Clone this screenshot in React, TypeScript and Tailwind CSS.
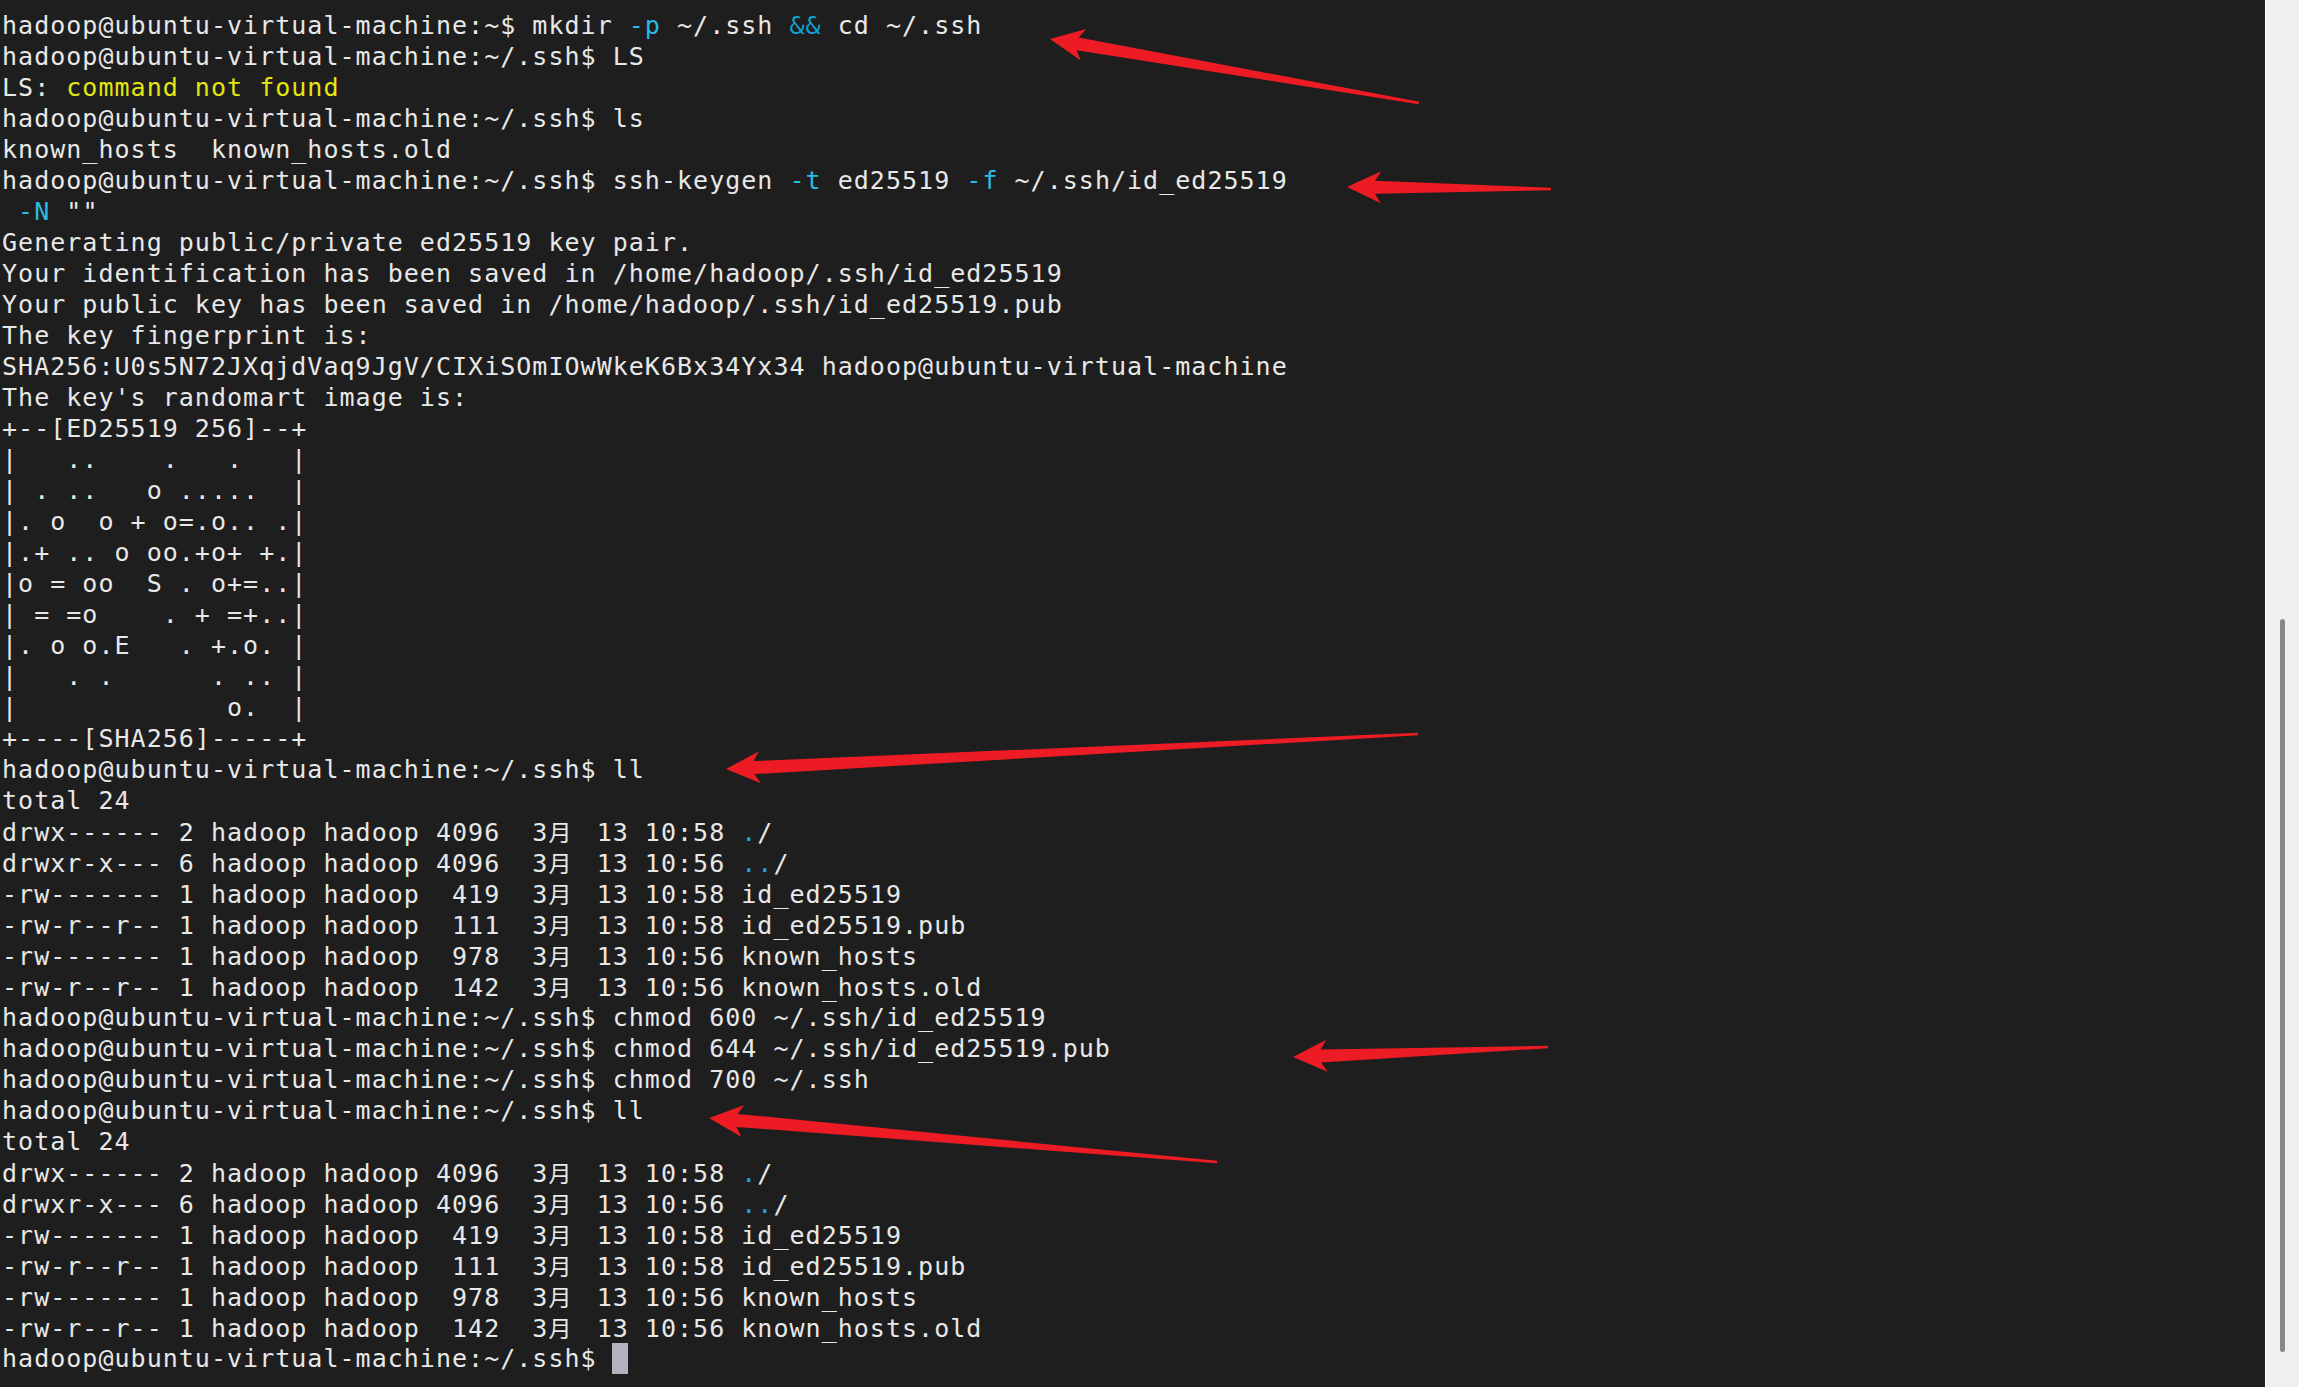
import React from "react";

type Seg = { t: string; c?: string };
type Line = (string | Seg)[];

const CY = "#2bbbe0";
const CY2 = "#129fd0";
const YE = "#e5e510";
const BL = "#1fa2e8";

const P = "hadoop@ubuntu-virtual-machine:~/.ssh$ ";

const lsBlock: Line[] = [
  ["drwx------ 2 hadoop hadoop 4096  3月 13 10:58 ", { t: ".", c: BL }, "/"],
  ["drwxr-x--- 6 hadoop hadoop 4096  3月 13 10:56 ", { t: "..", c: BL }, "/"],
  ["-rw------- 1 hadoop hadoop  419  3月 13 10:58 id_ed25519"],
  ["-rw-r--r-- 1 hadoop hadoop  111  3月 13 10:58 id_ed25519.pub"],
  ["-rw------- 1 hadoop hadoop  978  3月 13 10:56 known_hosts"],
  ["-rw-r--r-- 1 hadoop hadoop  142  3月 13 10:56 known_hosts.old"],
];

const lines: Line[] = [
  ["hadoop@ubuntu-virtual-machine:~$ mkdir ", { t: "-p", c: CY }, " ~/.ssh ", { t: "&&", c: CY2 }, " cd ~/.ssh"],
  [P + "LS"],
  ["LS: ", { t: "command not found", c: YE }],
  [P + "ls"],
  ["known_hosts  known_hosts.old"],
  [P + "ssh-keygen ", { t: "-t", c: CY }, " ed25519 ", { t: "-f", c: CY }, " ~/.ssh/id_ed25519"],
  [" ", { t: "-N", c: CY }, ' ""'],
  ["Generating public/private ed25519 key pair."],
  ["Your identification has been saved in /home/hadoop/.ssh/id_ed25519"],
  ["Your public key has been saved in /home/hadoop/.ssh/id_ed25519.pub"],
  ["The key fingerprint is:"],
  ["SHA256:U0s5N72JXqjdVaq9JgV/CIXiSOmIOwWkeK6Bx34Yx34 hadoop@ubuntu-virtual-machine"],
  ["The key's randomart image is:"],
  ["+--[ED25519 256]--+"],
  ["|   ..    .   .   |"],
  ["| . ..   o .....  |"],
  ["|. o  o + o=.o.. .|"],
  ["|.+ .. o oo.+o+ +.|"],
  ["|o = oo  S . o+=..|"],
  ["| = =o    . + =+..|"],
  ["|. o o.E   . +.o. |"],
  ["|   . .      . .. |"],
  ["|             o.  |"],
  ["+----[SHA256]-----+"],
  [P + "ll"],
  ["total 24"],
  ...lsBlock,
  [P + "chmod 600 ~/.ssh/id_ed25519"],
  [P + "chmod 644 ~/.ssh/id_ed25519.pub"],
  [P + "chmod 700 ~/.ssh"],
  [P + "ll"],
  ["total 24"],
  ...lsBlock,
];

function renderText(text: string, key: string, color?: string) {
  const parts = text.split("月");
  const out: React.ReactNode[] = [];
  parts.forEach((p, i) => {
    if (i > 0) {
      out.push(
        <span
          key={key + "m" + i}
          className="inline-block w-[32.14px] tracking-normal font-['Noto_Sans_CJK_SC',sans-serif] text-[23px]"
        >
          月
        </span>
      );
    }
    if (p) out.push(<span key={key + "p" + i}>{p}</span>);
  });
  return (
    <span key={key} style={color ? { color } : undefined}>
      {out}
    </span>
  );
}

type Arrow = { tip: [number, number]; tail: [number, number] };
const arrows: Arrow[] = [
  { tip: [1050, 39], tail: [1419, 103] },
  { tip: [1347, 187], tail: [1551, 189] },
  { tip: [726, 769], tail: [1418, 734] },
  { tip: [1293, 1057], tail: [1548, 1047] },
  { tip: [709, 1118], tail: [1217, 1162] },
];

function arrowPoints(a: Arrow) {
  const [tx, ty] = a.tip;
  const [ex, ey] = a.tail;
  const len = Math.hypot(ex - tx, ey - ty);
  const dx = (ex - tx) / len;
  const dy = (ey - ty) / len;
  const px = -dy;
  const py = dx;
  const headLen = 34;
  const headW = 16;
  const notch = 28;
  const shaftW = 6.5;
  const tailW = 1.2;
  const pts: [number, number][] = [
    [tx, ty],
    [tx + dx * headLen + px * headW, ty + dy * headLen + py * headW],
    [tx + dx * notch + px * shaftW, ty + dy * notch + py * shaftW],
    [ex + px * tailW, ey + py * tailW],
    [ex - px * tailW, ey - py * tailW],
    [tx + dx * notch - px * shaftW, ty + dy * notch - py * shaftW],
    [tx + dx * headLen - px * headW, ty + dy * headLen - py * headW],
  ];
  return pts.map((p) => p[0].toFixed(1) + "," + p[1].toFixed(1)).join(" ");
}

export default function App() {
  return (
    <div className="flex w-[2299px] h-[1387px] overflow-hidden bg-[#1e1e1e]">
      <div className="relative flex-1 bg-[#1e1e1e] pt-[10px] pl-[2px]">
        <div className="whitespace-pre font-['DejaVu_Sans_Mono',monospace] text-[25px] leading-[31px] tracking-[1.02px] text-[#e8e8e8]">
          {lines.map((ln, i) => (
            <div key={i} className="h-[31px]">
              {ln.map((s, j) =>
                typeof s === "string"
                  ? renderText(s, i + "-" + j)
                  : renderText(s.t, i + "-" + j, s.c)
              )}
            </div>
          ))}
          <div className="h-[31px] flex items-start">
            <span>{P}</span>
            <span className="inline-block w-[16px] h-[31px] bg-[#b3b3c0] ml-[-0.5px]" />
          </div>
        </div>
        <svg
          className="absolute inset-0 pointer-events-none"
          width="2265"
          height="1387"
          viewBox="0 0 2265 1387"
        >
          {arrows.map((a, i) => (
            <polygon key={i} points={arrowPoints(a)} fill="#ed1c24" />
          ))}
        </svg>
      </div>
      <div className="w-[34px] h-full bg-[#f0f0f0] border-l border-white">
        <div className="mt-[619px] ml-[14px] w-[5px] h-[733px] rounded-full bg-[#888888]" />
      </div>
    </div>
  );
}
